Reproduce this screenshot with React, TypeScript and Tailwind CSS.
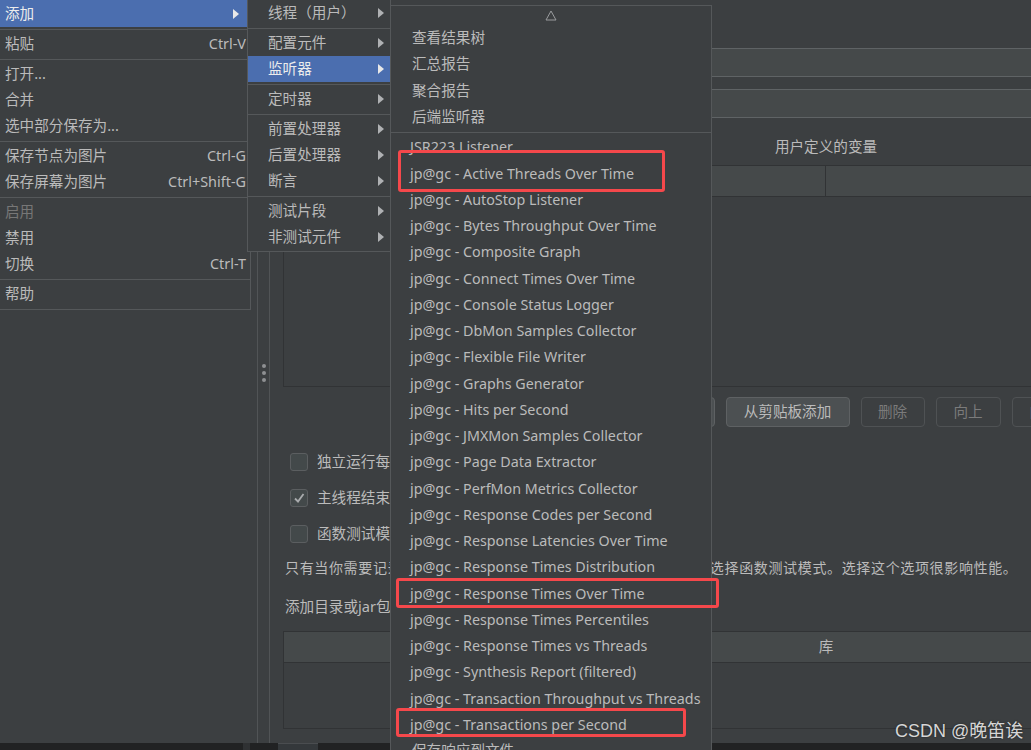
import React from 'react';

type MenuItem = {
  label?: string;
  shortcut?: string;
  sep?: boolean;
  disabled?: boolean;
  active?: boolean;
  sub?: boolean;
  h?: string;
};

const Arrow = ({ light }: { light?: boolean }) => (
  <svg width="6" height="10" viewBox="0 0 6 10" className="shrink-0">
    <path d="M0 0 L6 5 L0 10 Z" fill={light ? '#e8e8e8' : '#afb1b3'} />
  </svg>
);

const Sep = () => (
  <div className="h-[4px] flex items-center">
    <div className="h-px w-full bg-[#55585a]" />
  </div>
);

const mainMenu: MenuItem[] = [
  { label: '添加', active: true, sub: true, h: 'h-[27px]' },
  { sep: true },
  { label: '粘贴', shortcut: 'Ctrl-V' },
  { sep: true },
  { label: '打开...' },
  { label: '合并' },
  { label: '选中部分保存为...' },
  { sep: true },
  { label: '保存节点为图片', shortcut: 'Ctrl-G' },
  { label: '保存屏幕为图片', shortcut: 'Ctrl+Shift-G' },
  { sep: true },
  { label: '启用', disabled: true },
  { label: '禁用' },
  { label: '切换', shortcut: 'Ctrl-T' },
  { sep: true },
  { label: '帮助' },
];

const addMenu: MenuItem[] = [
  { label: '线程（用户）', sub: true },
  { sep: true },
  { label: '配置元件', sub: true },
  { label: '监听器', sub: true, active: true },
  { sep: true },
  { label: '定时器', sub: true },
  { sep: true },
  { label: '前置处理器', sub: true },
  { label: '后置处理器', sub: true },
  { label: '断言', sub: true },
  { sep: true },
  { label: '测试片段', sub: true },
  { label: '非测试元件', sub: true },
];

const builtins = ['查看结果树', '汇总报告', '聚合报告', '后端监听器'];

const plugins = [
  'JSR223 Listener',
  'jp@gc - Active Threads Over Time',
  'jp@gc - AutoStop Listener',
  'jp@gc - Bytes Throughput Over Time',
  'jp@gc - Composite Graph',
  'jp@gc - Connect Times Over Time',
  'jp@gc - Console Status Logger',
  'jp@gc - DbMon Samples Collector',
  'jp@gc - Flexible File Writer',
  'jp@gc - Graphs Generator',
  'jp@gc - Hits per Second',
  'jp@gc - JMXMon Samples Collector',
  'jp@gc - Page Data Extractor',
  'jp@gc - PerfMon Metrics Collector',
  'jp@gc - Response Codes per Second',
  'jp@gc - Response Latencies Over Time',
  'jp@gc - Response Times Distribution',
  'jp@gc - Response Times Over Time',
  'jp@gc - Response Times Percentiles',
  'jp@gc - Response Times vs Threads',
  'jp@gc - Synthesis Report (filtered)',
  'jp@gc - Transaction Throughput vs Threads',
  'jp@gc - Transactions per Second',
  '保存响应到文件',
];

const Checkbox = ({ checked, label }: { checked?: boolean; label: string }) => (
  <div className="h-[36px] flex items-center pl-[7px] gap-[9px]">
    <div className="w-[18px] h-[18px] rounded-[3px] border border-[#5b5e60] bg-[#43494a] flex items-center justify-center">
      {checked && (
        <svg width="12" height="12" viewBox="0 0 12 12">
          <path d="M2 6.5 L5 9.5 L10.5 2" fill="none" stroke="#a9abad" strokeWidth="1.8" />
        </svg>
      )}
    </div>
    <span className="text-[14.6px]">{label}</span>
  </div>
);

const Button = ({ label, w, disabled }: { label: string; w: string; disabled?: boolean }) => (
  <div
    className={`${w} h-[30px] rounded-[4px] border flex items-center justify-center text-[14.6px] ${
      disabled ? 'border-[#4f5254] text-[#7b7b7b]' : 'border-[#5e6163] bg-[#4c5052] text-[#bbbbbb]'
    }`}
  >
    {label}
  </div>
);

export default function App() {
  return (
    <div className="relative w-[1031px] h-[750px] overflow-hidden bg-[#3c3f41] text-[#bbbbbb] flex flex-col [font-family:'Noto_Sans','Noto_Sans_CJK_SC',sans-serif]">
      {/* background: JMeter window */}
      <div className="flex-1 flex min-h-0">
        <div className="w-[258px] border-r border-[#515456]" />
        <div className="w-[12px] border-r border-[#515456] flex flex-col items-center justify-center gap-[3px] pt-[3px]">
          <div className="w-[4px] h-[4px] rounded-full bg-[#8e9092]" />
          <div className="w-[4px] h-[4px] rounded-full bg-[#8e9092]" />
          <div className="w-[4px] h-[4px] rounded-full bg-[#8e9092]" />
        </div>
        <div className="flex-1 overflow-hidden pl-[13px]">
          <div className="w-[1086px] flex flex-col">
            <div className="h-[48px] flex items-center text-[14.6px]">测试计划</div>
            <div className="flex items-center gap-2">
              <span className="text-[14.6px] w-[60px]">名称：</span>
              <div className="flex-1 h-[29px] bg-[#45494a] border-y border-[#5f6365]" />
            </div>
            <div className="flex items-center gap-2 mt-[12px]">
              <span className="text-[14.6px] w-[60px]">注释：</span>
              <div className="flex-1 h-[29px] bg-[#45494a] border-y border-[#5f6365]" />
            </div>
            <div className="h-[47px] flex justify-center pt-[18px] text-[14.6px]">用户定义的变量</div>
            <div className="border border-[#313335]">
              <div className="h-[31px] bg-[#45494a] grid grid-cols-2 border-b border-[#313335] text-[14.6px]">
                <div className="flex items-center justify-center border-r border-[#313335]">名称：</div>
                <div className="flex items-center justify-center">值</div>
              </div>
              <div className="h-[189px]" />
            </div>
            <div className="mt-[10px] flex justify-center gap-[11px]">
              <Button label="详细" w="w-[64px]" disabled />
              <Button label="添加" w="w-[64px]" />
              <Button label="从剪贴板添加" w="w-[124px]" />
              <Button label="删除" w="w-[64px]" disabled />
              <Button label="向上" w="w-[65px]" disabled />
              <Button label="向下" w="w-[65px]" disabled />
            </div>
            <div className="mt-[17px]">
              <Checkbox label="独立运行每个线程组（例如在一个组运行结束后启动下一个）" />
              <Checkbox label="主线程结束后运行 tearDown线程组" checked />
              <Checkbox label="函数测试模式" />
            </div>
            <div className="h-[30px] flex items-center pl-[2px] text-[14px] tracking-[0.65px]">
              只有当你需要记录每个请求从服务器取得的数据到文件时，才需要选择函数测试模式。选择这个选项很影响性能。
            </div>
            <div className="mt-[10px] h-[30px] flex items-center pl-[2px] text-[14.6px]">添加目录或jar包到ClassPath</div>
            <div className="mt-[9px] border border-[#313335]">
              <div className="h-[31px] bg-[#45494a] border-b border-[#313335] flex items-center justify-center text-[14.6px]">库</div>
              <div className="h-[65px]" />
            </div>
          </div>
        </div>
      </div>
      <div className="h-[7px] bg-[#212223] flex">
        <div className="w-[243px]" />
        <div className="w-[7px] bg-[#2f3133]" />
        <div className="w-[28px]" />
        <div className="w-[40px] bg-[#34383b] border-t border-[#4a4d50]" />
      </div>

      {/* context menu */}
      <div className="absolute left-0 top-0 w-[251px] bg-[#3c3f41] border-r border-b border-[#55585a] pb-[2px]">
        {mainMenu.map((it, i) =>
          it.sep ? (
            <Sep key={i} />
          ) : (
            <div
              key={i}
              className={`${it.h ?? 'h-[26px]'} flex items-center justify-between pl-[5px] pr-[4px] ${
                it.active ? 'bg-[#4b6eaf] text-[#ececec]' : it.disabled ? 'text-[#777777]' : ''
              }`}
            >
              <span className="text-[14.6px]">{it.label}</span>
              {it.shortcut && <span className="text-[14.4px]">{it.shortcut}</span>}
              {it.sub && (
                <span className="pr-[7px]">
                  <Arrow light />
                </span>
              )}
            </div>
          )
        )}
      </div>

      {/* 添加 submenu */}
      <div className="absolute left-[247px] top-0 w-[144px] bg-[#3c3f41] border-x border-b border-[#55585a] pb-[1px]">
        {addMenu.map((it, i) =>
          it.sep ? (
            <Sep key={i} />
          ) : (
            <div
              key={i}
              className={`h-[26px] flex items-center justify-between pl-[20px] pr-[6px] ${
                it.active ? 'bg-[#4b6eaf] text-[#ececec]' : ''
              }`}
            >
              <span className="text-[14.6px]">{it.label}</span>
              <Arrow light={it.active} />
            </div>
          )
        )}
      </div>

      {/* 监听器 submenu */}
      <div className="absolute left-[390px] top-[5px] w-[322px] bottom-0 bg-[#3c3f41] border-x border-t border-[#55585a] overflow-hidden">
        <div className="h-[19px] flex items-center justify-center">
          <svg width="12" height="11" viewBox="0 0 12 11">
            <path d="M6 1 L11 10 L1 10 Z" fill="none" stroke="#9a9c9e" strokeWidth="1" />
          </svg>
        </div>
        {builtins.map((b) => (
          <div key={b} className="h-[26.25px] flex items-center pl-[21px] text-[14.6px]">
            {b}
          </div>
        ))}
        <Sep />
        {plugins.map((p) => (
          <div
            key={p}
            className={`h-[26.25px] flex items-center ${p.startsWith('保存') ? 'text-[14.6px] pl-[21px]' : 'text-[14.3px] pl-[19px]'}`}
          >
            {p}
          </div>
        ))}
      </div>

      {/* annotations */}
      <div className="absolute left-[398px] top-[150px] w-[267px] h-[42px] border-[3px] border-[#f5484b] rounded-[3px]" />
      <div className="absolute left-[396px] top-[578px] w-[323px] h-[30px] border-[3px] border-[#f5484b] rounded-[3px]" />
      <div className="absolute left-[396px] top-[708px] w-[290px] h-[29px] border-[3px] border-[#f5484b] rounded-[3px]" />

      <div className="absolute left-[895px] top-[718px] text-[18px] text-[#d6d6d6] [font-family:'Liberation_Sans','Noto_Sans_CJK_SC',sans-serif] [text-shadow:0_0_2px_rgba(0,0,0,0.5)]">
        CSDN @晚笛诶
      </div>
    </div>
  );
}
